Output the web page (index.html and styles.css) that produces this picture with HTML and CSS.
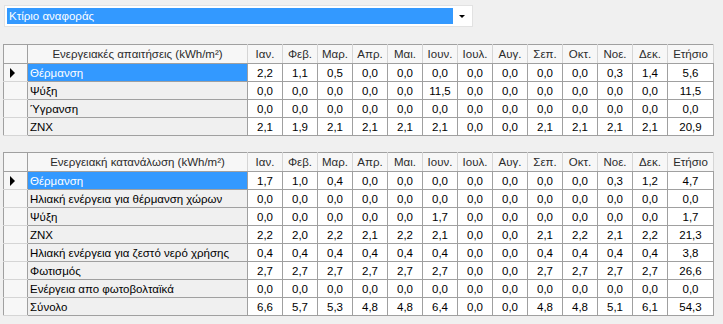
FILE: index.html
```html
<!DOCTYPE html>
<html lang="el">
<head>
    <meta charset="UTF-8">
    <title>Ενεργειακά αποτελέσματα</title>
    <link rel="stylesheet" href="styles.css">
</head>
<body>
    <div class="combo">
        <div class="combo-text">Κτίριο αναφοράς</div>
        <div class="combo-btn"><span class="arrow"></span></div>
    </div>

    <table class="grid">
        <colgroup>
            <col class="c-head"><col class="c-name">
            <col class="c-m"><col class="c-m"><col class="c-m"><col class="c-m"><col class="c-m"><col class="c-m">
            <col class="c-m"><col class="c-m"><col class="c-m"><col class="c-m"><col class="c-m"><col class="c-m">
            <col class="c-year">
        </colgroup>
        <thead>
            <tr>
                <th class="corner"></th>
                <th>Ενεργειακές απαιτήσεις (kWh/m²)</th>
                <th>Ιαν.</th><th>Φεβ.</th><th>Μαρ.</th><th>Απρ.</th><th>Μαι.</th><th>Ιουν.</th>
                <th>Ιουλ.</th><th>Αυγ.</th><th>Σεπ.</th><th>Οκτ.</th><th>Νοε.</th><th>Δεκ.</th>
                <th>Ετήσιο</th>
            </tr>
        </thead>
        <tbody>
            <tr>
                <td class="rh"><span class="cur"></span></td>
                <td class="name selected">Θέρμανση</td>
                <td>2,2</td><td>1,1</td><td>0,5</td><td>0,0</td><td>0,0</td><td>0,0</td>
                <td>0,0</td><td>0,0</td><td>0,0</td><td>0,0</td><td>0,3</td><td>1,4</td>
                <td>5,6</td>
            </tr>
            <tr>
                <td class="rh"></td>
                <td class="name">Ψύξη</td>
                <td>0,0</td><td>0,0</td><td>0,0</td><td>0,0</td><td>0,0</td><td>11,5</td>
                <td>0,0</td><td>0,0</td><td>0,0</td><td>0,0</td><td>0,0</td><td>0,0</td>
                <td>11,5</td>
            </tr>
            <tr>
                <td class="rh"></td>
                <td class="name">Ύγρανση</td>
                <td>0,0</td><td>0,0</td><td>0,0</td><td>0,0</td><td>0,0</td><td>0,0</td>
                <td>0,0</td><td>0,0</td><td>0,0</td><td>0,0</td><td>0,0</td><td>0,0</td>
                <td>0,0</td>
            </tr>
            <tr>
                <td class="rh"></td>
                <td class="name">ZNX</td>
                <td>2,1</td><td>1,9</td><td>2,1</td><td>2,1</td><td>2,1</td><td>2,1</td>
                <td>0,0</td><td>0,0</td><td>2,1</td><td>2,1</td><td>2,1</td><td>2,1</td>
                <td>20,9</td>
            </tr>
        </tbody>
    </table>

    <table class="grid">
        <colgroup>
            <col class="c-head"><col class="c-name">
            <col class="c-m"><col class="c-m"><col class="c-m"><col class="c-m"><col class="c-m"><col class="c-m">
            <col class="c-m"><col class="c-m"><col class="c-m"><col class="c-m"><col class="c-m"><col class="c-m">
            <col class="c-year">
        </colgroup>
        <thead>
            <tr>
                <th class="corner"></th>
                <th>Ενεργειακή κατανάλωση (kWh/m²)</th>
                <th>Ιαν.</th><th>Φεβ.</th><th>Μαρ.</th><th>Απρ.</th><th>Μαι.</th><th>Ιουν.</th>
                <th>Ιουλ.</th><th>Αυγ.</th><th>Σεπ.</th><th>Οκτ.</th><th>Νοε.</th><th>Δεκ.</th>
                <th>Ετήσιο</th>
            </tr>
        </thead>
        <tbody>
            <tr>
                <td class="rh"><span class="cur"></span></td>
                <td class="name selected">Θέρμανση</td>
                <td>1,7</td><td>1,0</td><td>0,4</td><td>0,0</td><td>0,0</td><td>0,0</td>
                <td>0,0</td><td>0,0</td><td>0,0</td><td>0,0</td><td>0,3</td><td>1,2</td>
                <td>4,7</td>
            </tr>
            <tr>
                <td class="rh"></td>
                <td class="name">Ηλιακή ενέργεια για θέρμανση χώρων</td>
                <td>0,0</td><td>0,0</td><td>0,0</td><td>0,0</td><td>0,0</td><td>0,0</td>
                <td>0,0</td><td>0,0</td><td>0,0</td><td>0,0</td><td>0,0</td><td>0,0</td>
                <td>0,0</td>
            </tr>
            <tr>
                <td class="rh"></td>
                <td class="name">Ψύξη</td>
                <td>0,0</td><td>0,0</td><td>0,0</td><td>0,0</td><td>0,0</td><td>1,7</td>
                <td>0,0</td><td>0,0</td><td>0,0</td><td>0,0</td><td>0,0</td><td>0,0</td>
                <td>1,7</td>
            </tr>
            <tr>
                <td class="rh"></td>
                <td class="name">ZNX</td>
                <td>2,2</td><td>2,0</td><td>2,2</td><td>2,1</td><td>2,2</td><td>2,1</td>
                <td>0,0</td><td>0,0</td><td>2,1</td><td>2,2</td><td>2,1</td><td>2,2</td>
                <td>21,3</td>
            </tr>
            <tr>
                <td class="rh"></td>
                <td class="name">Ηλιακή ενέργεια για ζεστό νερό χρήσης</td>
                <td>0,4</td><td>0,4</td><td>0,4</td><td>0,4</td><td>0,4</td><td>0,4</td>
                <td>0,0</td><td>0,0</td><td>0,4</td><td>0,4</td><td>0,4</td><td>0,4</td>
                <td>3,8</td>
            </tr>
            <tr>
                <td class="rh"></td>
                <td class="name">Φωτισμός</td>
                <td>2,7</td><td>2,7</td><td>2,7</td><td>2,7</td><td>2,7</td><td>2,7</td>
                <td>0,0</td><td>0,0</td><td>2,7</td><td>2,7</td><td>2,7</td><td>2,7</td>
                <td>26,6</td>
            </tr>
            <tr>
                <td class="rh"></td>
                <td class="name">Ενέργεια απο φωτοβολταϊκά</td>
                <td>0,0</td><td>0,0</td><td>0,0</td><td>0,0</td><td>0,0</td><td>0,0</td>
                <td>0,0</td><td>0,0</td><td>0,0</td><td>0,0</td><td>0,0</td><td>0,0</td>
                <td>0,0</td>
            </tr>
            <tr>
                <td class="rh"></td>
                <td class="name">Σύνολο</td>
                <td>6,6</td><td>5,7</td><td>5,3</td><td>4,8</td><td>4,8</td><td>6,4</td>
                <td>0,0</td><td>0,0</td><td>4,8</td><td>4,8</td><td>5,1</td><td>6,1</td>
                <td>54,3</td>
            </tr>
        </tbody>
    </table>
</body>
</html>
```

FILE: styles.css
```css
:root {
    --page-bg: #f0f0f0;
    --cell-bg: #ffffff;
    --name-bg: #f0f0f0;
    --head-bg: #f7f7f7;
    --grid-line: #a0a0a0;
    --head-line: #d5d5d5;
    --highlight: #3399ff;
    --text: #000000;
    --head-text: #2b2b2b;
}

* {
    margin: 0;
    padding: 0;
    box-sizing: border-box;
}

body {
    font-family: 'Liberation Sans', Arial, sans-serif;
    font-size: 11.5px;
    background: var(--page-bg);
    color: var(--text);
    padding: 5px 0 0 3px;
    overflow: hidden;
}

.combo {
    display: flex;
    width: 469px;
    height: 22px;
    margin-left: 1px;
    padding: 2px;
    background: #fff;
    border: 1px solid #e2e2e2;
}

.combo-text {
    flex: 1;
    background: var(--highlight);
    color: #fff;
    line-height: 16px;
    padding-left: 2px;
}

.combo-btn {
    width: 17px;
    display: flex;
    justify-content: center;
    align-items: center;
}

.arrow {
    width: 0;
    height: 0;
    border-left: 3px solid transparent;
    border-right: 3px solid transparent;
    border-top: 3px solid #000;
}

.grid {
    border-collapse: collapse;
    table-layout: fixed;
    width: 710px;
    margin-top: 17px;
    border: 1px solid var(--grid-line);
}

.grid + .grid {
    margin-top: 16px;
}

.c-head { width: 24px; }
.c-name { width: 220px; }
.c-m { width: 35px; }
.c-year { width: 46px; }

.grid th {
    height: 19px;
    background: var(--head-bg);
    color: var(--head-text);
    font-weight: normal;
    text-align: center;
    white-space: nowrap;
    border-right: 1px solid var(--head-line);
    border-bottom: 1px solid var(--grid-line);
}

.grid th.corner {
    border-right: 1px solid var(--grid-line);
}

.grid td {
    height: 18px;
    background: var(--cell-bg);
    border: 1px solid var(--grid-line);
    text-align: center;
    white-space: nowrap;
    overflow: hidden;
}

.grid td.rh {
    background: var(--head-bg);
    border-top-color: var(--head-line);
    border-bottom-color: var(--head-line);
    text-align: left;
    padding-left: 6px;
}

.grid td.name {
    background: var(--name-bg);
    text-align: left;
    padding-left: 2px;
}

.grid td.selected {
    background: var(--highlight);
    color: #fff;
}

.cur {
    display: block;
    width: 0;
    height: 0;
    border-top: 5px solid transparent;
    border-bottom: 5px solid transparent;
    border-left: 5px solid #000;
}
```
